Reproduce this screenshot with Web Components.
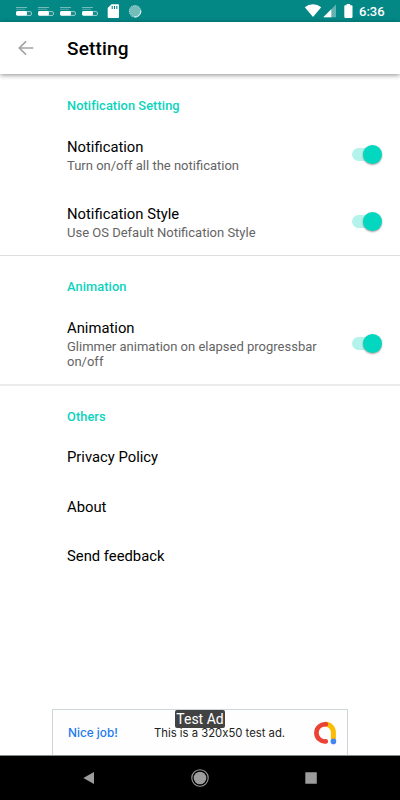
<!DOCTYPE html>
<html lang="en">
<head>
<meta charset="utf-8">
<title>Setting</title>
<style>
  html, body {
    margin: 0;
    height: 100%;
  }
  body {
    font-family: Roboto, sans-serif;
    background: #fff;
    color: #000;
    overflow: hidden;
  }
</style>
</head>
<body>
<settings-screen></settings-screen>

<script>
class StatusBar extends HTMLElement {
  constructor() {
    super();
    this.attachShadow({ mode: 'open' });
    const note = x => `
      <g transform="translate(${x} 0)">
        <rect x="0" y="7" width="11" height="1" fill="#6fbcba"/>
        <rect x="0" y="8.8" width="9" height="1" fill="#4fa9a7"/>
        <rect x=".5" y="11.5" width="15" height="4" rx="1.5" fill="#178d8b" stroke="#8cc9c7"/>
        <rect x="0" y="11" width="11" height="4.6" rx="1.6" fill="#fff"/>
      </g>`;
    this.shadowRoot.innerHTML = `
      <style>
        :host {
          display: flex;
          justify-content: space-between;
          height: 22px;
          background: #038886;
          color: #fff;
        }
        svg { display: block; }
        .right { display: flex; padding-right: 15px; }
        .time {
          width: 26px;
          font-size: 13px;
          font-weight: 500;
          line-height: 23px;
          white-space: nowrap;
        }
      </style>
      <svg width="150" height="22" viewBox="0 0 150 22">
        ${note(16)}${note(38)}${note(60)}${note(82)}
        <path d="M111.5 4.3H118a1 1 0 0 1 1 1V17a1 1 0 0 1-1 1h-9.3a1 1 0 0 1-1-1V8z" fill="#fff"/>
        <path d="M112.2 6v3M114.5 6v3M116.8 6v3" stroke="#038886" stroke-width="1.1"/>
        <circle cx="135" cy="11.2" r="5.4" fill="#74bdbb"/>
        <circle cx="135" cy="11.2" r="5.6" fill="none" stroke="#a5d5d3" stroke-width="1.1" stroke-dasharray="1.3 .5"/>
        <path d="M140.9 10.5A6 6 0 0 1 134 17" fill="none" stroke="#eef8f7" stroke-width="1"/>
      </svg>
      <div class="right">
        <svg width="59" height="22" viewBox="300 0 59 22">
          <path d="M313 17 304.8 7.3Q308.3 4.3 313 4.3T321.2 7.3Z" fill="#fff"/>
          <path d="M336 4.6V17.3H323.3Z" fill="#62b3b2"/>
          <path d="M331.3 9.3V17.3H323.3Z" fill="#fff"/>
          <path d="M346.5 4h3.6v1.3h1.6a.8.8 0 0 1 .8.8v11a.8.8 0 0 1-.8.8h-6.6a.8.8 0 0 1-.8-.8v-11a.8.8 0 0 1 .8-.8h1.4z" fill="#fff"/>
        </svg>
        <div class="time">6:36</div>
      </div>
    `;
  }
}
customElements.define('status-bar', StatusBar);

class AppBar extends HTMLElement {
  constructor() {
    super();
    this.attachShadow({ mode: 'open' });
    this.shadowRoot.innerHTML = `
      <style>
        :host {
          display: flex;
          align-items: center;
          height: 52px;
          padding-left: 17px;
          gap: 32px;
          box-sizing: border-box;
          background: #fff;
          box-shadow: 0 1px 5px rgba(0, 0, 0, .45);
        }
        h1 {
          margin: 0;
          font-size: 19px;
          font-weight: 500;
          line-height: 24px;
          letter-spacing: .15px;
          padding-top: 2px;
        }
      </style>
      <svg width="18" height="18" viewBox="0 0 18 18" fill="none" stroke="#a4a4a4" stroke-width="1.7">
        <path d="M16.3 9H3M9 2.3 2.3 9l6.7 6.7"/>
      </svg>
      <h1><slot></slot></h1>
    `;
  }
}
customElements.define('app-bar', AppBar);

class SettingSection extends HTMLElement {
  constructor() {
    super();
    this.attachShadow({ mode: 'open' });
    this.shadowRoot.innerHTML = `
      <style>
        :host { display: block; }
        h2 {
          margin: 0;
          padding: 23px 0 7px 67px;
          font-size: 12.8px;
          font-weight: 500;
          line-height: 17px;
          letter-spacing: .08px;
          color: #0ad3bd;
        }
        :host([divided]) { border-top: 1px solid #dedede; }
        :host([divided]) h2 { padding: 22px 0 8px 67px; }
        :host([divided="thick"]) { border-top: 2px solid #ebebeb; }
        :host([divided="thick"]) h2 { padding-bottom: 7.5px; }
      </style>
      <h2>${this.getAttribute('label')}</h2>
      <slot></slot>
    `;
  }
}
customElements.define('setting-section', SettingSection);

class ToggleSwitch extends HTMLElement {
  constructor() {
    super();
    this.attachShadow({ mode: 'open' });
    this.shadowRoot.innerHTML = `
      <style>
        :host {
          display: grid;
          align-items: center;
          width: 30px;
          height: 19px;
        }
        .track, .thumb { grid-area: 1 / 1; }
        .track {
          width: 26px;
          height: 13px;
          border-radius: 7px;
          background: #b3f3eb;
        }
        .thumb {
          justify-self: end;
          width: 19px;
          height: 19px;
          border-radius: 50%;
          background: #04d7c0;
          box-shadow: 0 1px 2px rgba(0, 0, 0, .38);
        }
      </style>
      <div class="track"></div>
      <div class="thumb"></div>
    `;
  }
}
customElements.define('toggle-switch', ToggleSwitch);

class SettingRow extends HTMLElement {
  constructor() {
    super();
    this.attachShadow({ mode: 'open' });
    const summary = this.getAttribute('summary');
    this.shadowRoot.innerHTML = `
      <style>
        :host {
          display: flex;
          align-items: center;
          min-height: 49.6px;
          padding: 0 18px 0 67px;
          box-sizing: border-box;
        }
        :host([summary]) { min-height: 67px; padding-top: 15px; padding-bottom: 15px; }
        .text { flex: 1; }
        .title {
          font-size: 14.8px;
          line-height: 20px;
        }
        .summary {
          width: 262px;
          font-size: 13px;
          line-height: 15px;
          padding-top: 1px;
          color: #646464;
        }
      </style>
      <div class="text">
        <div class="title"><slot></slot></div>
        ${summary ? `<div class="summary">${summary}</div>` : ''}
      </div>
      ${this.hasAttribute('toggle') ? '<toggle-switch></toggle-switch>' : ''}
    `;
  }
}
customElements.define('setting-row', SettingRow);

class AdBanner extends HTMLElement {
  constructor() {
    super();
    this.attachShadow({ mode: 'open' });
    this.shadowRoot.innerHTML = `
      <style>
        :host {
          display: flex;
          align-items: center;
          position: relative;
          width: 296px;
          height: 46px;
          margin: 0 auto;
          padding: 0 10px 0 15px;
          box-sizing: border-box;
          border: 1px solid #cfd6da;
          border-bottom: 0;
          background: #fefefe;
          font-family: Inter, Roboto, sans-serif;
          font-feature-settings: "calt" 0;
          white-space: nowrap;
        }
        .job { width: 86px; color: #2079ee; font-size: 11.8px; font-weight: 500; }
        .copy { flex: 1; color: #222; font-size: 11.3px; }
        .badge {
          position: absolute;
          left: 122px;
          top: 0;
          width: 50px;
          height: 18px;
          border-radius: 2px;
          background: #424242;
          color: #fff;
          font: 14px/19px Roboto, sans-serif;
          text-align: center;
        }
      </style>
      <div class="job">Nice job!</div>
      <div class="copy">This is a 320x50 test ad.</div>
      <svg width="24" height="24" viewBox="0 0 24 24" fill="none" stroke-width="4.6" stroke-linecap="round">
        <path d="M12.5 3.3a8 8 0 0 1 7.9 8.2v7" stroke="#fbbc04" stroke-width="5"/>
        <path d="M13 3.3A8.6 8.6 0 1 0 12.8 20.4" stroke="#ea4335"/>
        <circle cx="20.4" cy="20.4" r="2.8" fill="#4285f4"/>
      </svg>
      <div class="badge">Test Ad</div>
    `;
  }
}
customElements.define('ad-banner', AdBanner);

class NavBar extends HTMLElement {
  constructor() {
    super();
    this.attachShadow({ mode: 'open' });
    this.shadowRoot.innerHTML = `
      <style>
        :host {
          display: flex;
          align-items: center;
          justify-content: space-between;
          height: 45px;
          padding: 0 80px;
          box-sizing: border-box;
          border-top: 1px solid #808a88;
          background: #000;
        }
      </style>
      <svg width="18" height="18" viewBox="0 0 18 18"><path d="M3.3 9 14 3v12z" fill="#9c9c9c"/></svg>
      <svg width="18" height="18" viewBox="0 0 18 18">
        <circle cx="9" cy="9" r="8.2" fill="none" stroke="#9c9c9c" stroke-width="1.1"/>
        <circle cx="9" cy="9" r="6.3" fill="#9c9c9c"/>
      </svg>
      <svg width="18" height="18" viewBox="0 0 18 18"><rect x="3.3" y="3.2" width="11.5" height="11.5" rx=".5" fill="#9c9c9c"/></svg>
    `;
  }
}
customElements.define('nav-bar', NavBar);

class SettingsScreen extends HTMLElement {
  constructor() {
    super();
    this.attachShadow({ mode: 'open' });
    this.shadowRoot.innerHTML = `
      <style>
        :host {
          display: flex;
          flex-direction: column;
          width: 400px;
          height: 800px;
        }
        main { flex: 1; }
      </style>
      <status-bar></status-bar>
      <app-bar>Setting</app-bar>
      <main>
        <setting-section label="Notification Setting">
          <setting-row toggle summary="Turn on/off all the notification">Notification</setting-row>
          <setting-row toggle summary="Use OS Default Notification Style">Notification Style</setting-row>
        </setting-section>
        <setting-section label="Animation" divided>
          <setting-row toggle summary="Glimmer animation on elapsed progressbar on/off">Animation</setting-row>
        </setting-section>
        <setting-section label="Others" divided="thick">
          <setting-row>Privacy Policy</setting-row>
          <setting-row>About</setting-row>
          <setting-row>Send feedback</setting-row>
        </setting-section>
      </main>
      <ad-banner></ad-banner>
      <nav-bar></nav-bar>
    `;
  }
}
customElements.define('settings-screen', SettingsScreen);
</script>
</body>
</html>
